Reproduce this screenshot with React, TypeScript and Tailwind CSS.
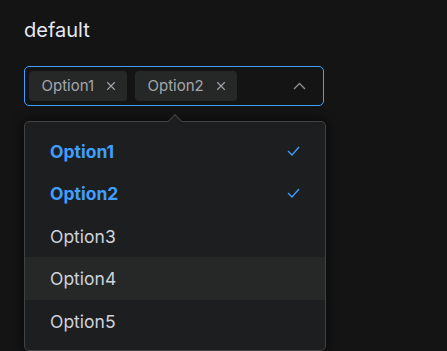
import React from 'react'

const options = ['Option1', 'Option2', 'Option3', 'Option4', 'Option5']
const selected = ['Option1', 'Option2']

const CloseIcon = () => (
  <svg width="10" height="10" viewBox="0 0 12 12" fill="none" stroke="currentColor" strokeWidth="1.3">
    <path d="M1.5 1.5l9 9M10.5 1.5l-9 9" />
  </svg>
)

const CheckIcon = () => (
  <svg width="13" height="10" viewBox="0 0 13 10" fill="none" stroke="currentColor" strokeWidth="1.3">
    <path d="M1 5l4 4 7-8" />
  </svg>
)

export default function App() {
  return (
    <div
      className="w-[447px] h-[351px] overflow-hidden bg-[#141414] pl-6 pt-[16px]"
      style={{ fontFamily: 'Inter, "Noto Sans", sans-serif' }}
    >
      <div className="text-[20px] leading-[28px] text-[#e5eaf3]">default</div>

      <div className="mt-[22px] w-[300px] h-[40px] border border-[#409eff] rounded-[5px] flex items-center pl-[4px] pr-[17px]">
        <div className="flex-1 flex items-center gap-[8px]">
          {selected.map((s) => (
            <div
              key={s}
              className="h-[30px] rounded-[4px] bg-[#262727] text-[#a3a6ad] text-[15px] flex items-center pl-[12.5px] pr-[11px] gap-[12px]"
            >
              <span>{s}</span>
              <CloseIcon />
            </div>
          ))}
        </div>
        <svg width="13" height="8" viewBox="0 0 13 8" fill="none" stroke="#8d9095" strokeWidth="1.3">
          <path d="M1 7l5.5-5.5L12 7" />
        </svg>
      </div>

      <div className="relative mt-[15px] w-[302px] border border-[#414243] rounded-[5px] bg-[#1d1e1f] py-[7.5px] shadow-[0_0_12px_rgba(0,0,0,0.72)]">
        <div className="absolute -top-[6px] left-[145px] w-[10px] h-[10px] rotate-45 bg-[#1d1e1f] border-t border-l border-[#414243]" />
        {options.map((o) => {
          const isSel = selected.includes(o)
          return (
            <div
              key={o}
              className={`h-[42.5px] flex items-center justify-between pl-[25px] pr-[25px] text-[17.5px] ${
                isSel ? 'text-[#409eff] font-bold' : 'text-[#cfd3dc]'
              } ${o === 'Option4' ? 'bg-[#262727]' : ''}`}
            >
              <span className="translate-y-[1px]">{o}</span>
              {isSel && <CheckIcon />}
            </div>
          )
        })}
      </div>
    </div>
  )
}
